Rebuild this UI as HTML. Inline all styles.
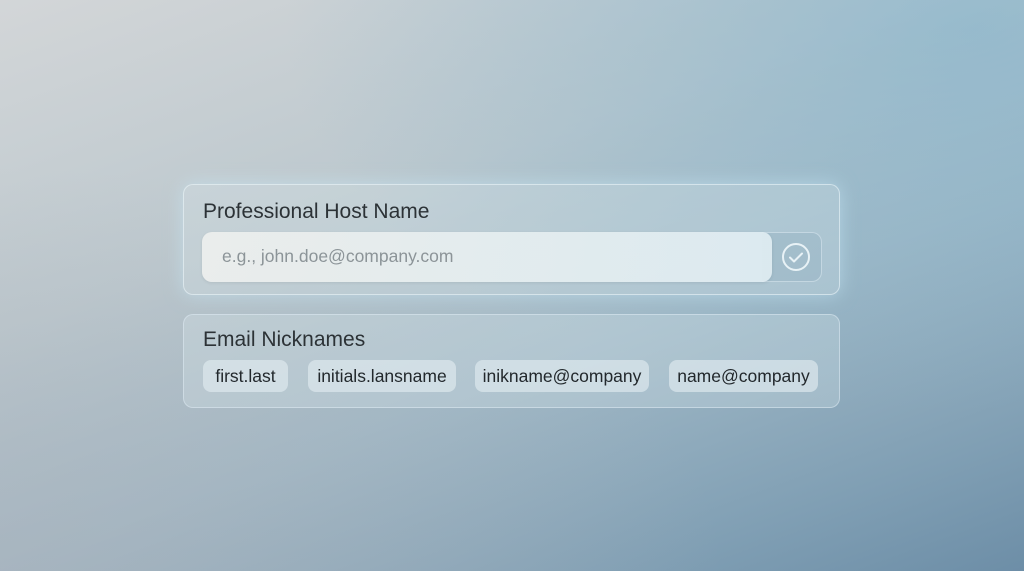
<!DOCTYPE html><html><head><style>
*{margin:0;padding:0;box-sizing:border-box}
body{width:1024px;height:571px;overflow:hidden;font-family:"Liberation Sans",sans-serif;position:relative;
background:linear-gradient(160deg,#d3d6d8 0%,#bcc8ce 35%,#a0b8c6 60%,#809fb4 85%,#6d8ea7 100%);}
.glow{position:absolute;left:0;top:0;width:1024px;height:571px;background:radial-gradient(ellipse at 95% 5%,rgba(130,180,205,.6),transparent 50%),radial-gradient(ellipse at 0% 100%,rgba(175,178,185,.5),transparent 50%)}
.p{position:absolute;left:183px;width:657px;border-radius:10px;background:rgba(220,232,238,.28);border:1.5px solid rgba(235,245,250,.6)}
.p1{top:184px;height:111px;box-shadow:0 0 18px rgba(200,235,250,.55)}
.p2{top:314px;height:94px;border-color:rgba(225,238,245,.5)}
.lab{position:absolute;left:19px;font-size:21px;color:#2c3236}
.in{position:absolute;left:18px;top:47px;width:570px;height:50px;border-radius:10px;background:linear-gradient(90deg,rgba(238,240,238,.9),rgba(225,238,243,.9));box-shadow:0 1px 3px rgba(0,0,0,.08);font-size:17.5px;color:#8c9498;padding:14px 0 0 20px}
.btn{position:absolute;left:578px;top:47px;width:60px;height:50px;border-radius:0 10px 10px 0;background:rgba(150,180,195,.45);border:1.5px solid rgba(230,242,248,.5);border-left:none}
.chip{position:absolute;top:45px;height:32px;border-radius:8px;background:rgba(225,235,240,.65);font-size:17.5px;color:#22282c;line-height:32px;text-align:center}
</style></head><body><div class="glow"></div>
<div class="p p1"><div class="lab" style="top:15px">Professional Host Name</div>
<div class="btn"><svg width="60" height="50" style="position:absolute;left:0;top:0"><circle cx="34" cy="24" r="13" fill="none" stroke="#e8f2f6" stroke-width="2"/><path d="M28 24.5l4 4 8-8" fill="none" stroke="#e8f2f6" stroke-width="2" stroke-linecap="round" stroke-linejoin="round"/></svg></div>
<div class="in">e.g., john.doe@company.com</div></div>
<div class="p p2"><div class="lab" style="top:13px">Email Nicknames</div>
<div class="chip" style="left:19px;width:85px">first.last</div>
<div class="chip" style="left:124px;width:148px">initials.lansname</div>
<div class="chip" style="left:291px;width:174px">inikname@company</div>
<div class="chip" style="left:485px;width:149px">name@company</div>
</div>
</body></html>
